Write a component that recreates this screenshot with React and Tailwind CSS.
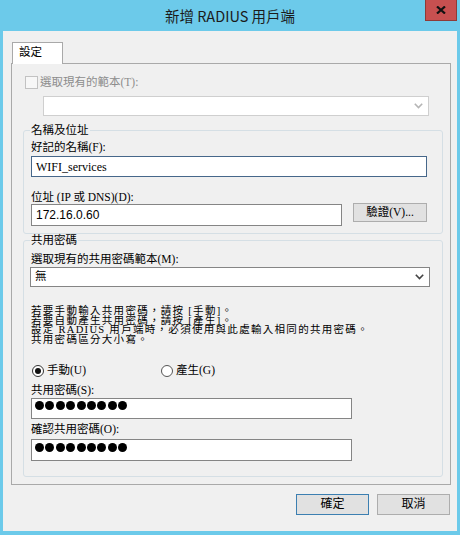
import React from "react";

const Chevron = ({ color }) => (
  <svg width="9" height="6" viewBox="0 0 9 6" fill="none">
    <polyline points="0.8,0.8 4.5,4.6 8.2,0.8" stroke={color} strokeWidth="1.6" />
  </svg>
);

const Dots = () => (
  <>
    {Array.from({ length: 9 }).map((_, i) => (
      <span key={i} className="w-[9px] h-[9px] rounded-full bg-black shrink-0" />
    ))}
  </>
);

const App = () => {
  return (
    <div className="w-[460px] h-[535px] bg-[#6ccaea] flex flex-col pl-[3px] pr-[3px] pb-[4px] font-['Liberation_Serif','Noto_Sans_CJK_TC',serif] text-black">
      {/* title bar */}
      <div className="h-[31px] relative flex items-center justify-center">
        <span className="text-[14.5px] leading-[18px] font-['Noto_Sans_CJK_TC',sans-serif] text-[#1b1b1b]">
          新增 RADIUS 用戶端
        </span>
        <div className="absolute right-0 top-0 w-[32px] h-[21px] bg-[#c75050] border border-t-0 border-[#8e3b37] flex items-center justify-center">
          <svg width="10" height="8" viewBox="0 0 10 8">
            <path d="M1 0.5 L9 7.5 M9 0.5 L1 7.5" stroke="#111" strokeWidth="2.2" />
          </svg>
        </div>
      </div>

      {/* dialog body */}
      <div className="flex-1 bg-[#f0f0f0] pt-[11px] pl-[8px] pr-[6px] flex flex-col">
        <div className="flex pl-px">
          <div className="relative z-10 -mb-px h-[22px] w-[51px] border border-b-0 border-[#a9a9a9] bg-white pl-[6px] pt-[3px] text-[11.5px] leading-[13px]">
            設定
          </div>
        </div>

        <div className="h-[422px] border border-[#a9a9a9] bg-[#f0f0f0] flex flex-col">
          {/* template checkbox */}
          <div className="mt-[12px] ml-[13px] flex items-center h-[13px]">
            <span className="w-[13px] h-[13px] border border-[#c2c2c2] bg-[#f7f7f7]" />
            <span className="ml-[2px] text-[11.5px] leading-[13px] text-[#8d8d8d]">選取現有的範本(T):</span>
          </div>
          <div className="mt-[7px] ml-[31px] w-[386px] h-[20px] border border-[#cfcfcf] bg-white flex items-center justify-end pr-[5px]">
            <Chevron color="#b5b5b5" />
          </div>

          {/* name and address */}
          <fieldset className="mt-[8px] ml-[11px] w-[420px] border border-[#d5dfe5] rounded-[3px] px-[7px] pb-[7px]">
            <legend className="-ml-[1px] px-px text-[11.5px] leading-[13px]">名稱及位址</legend>
            <div className="mt-[4px] text-[11.5px] leading-[13px]">好記的名稱(F):</div>
            <div className="mt-[2px] h-[21px] w-[396px] border border-[#46678a] bg-white pl-[4px] flex items-center text-[12px]">
              WIFI_services
            </div>
            <div className="mt-[14px] text-[11.5px] leading-[13px]">位址 (IP 或 DNS)(D):</div>
            <div className="flex items-start gap-[11px]">
              <div className="h-[22px] w-[311px] border border-[#858585] bg-white pl-[4px] flex items-center text-[12px] font-['Liberation_Sans',sans-serif]">
                172.16.0.60
              </div>
              <button className="-mt-px h-[19px] w-[74px] border border-[#adadad] bg-[#e1e1e1] text-[11.5px] leading-[13px]">
                驗證(V)...
              </button>
            </div>
          </fieldset>

          {/* shared secret */}
          <fieldset className="ml-[11px] w-[420px] border border-[#d5dfe5] rounded-[3px] px-[7px] pb-[15px]">
            <legend className="-ml-[1px] px-px text-[11.5px] leading-[13px]">共用密碼</legend>
            <div className="mt-[6px] text-[11.5px] leading-[13px]">選取現有的共用密碼範本(M):</div>
            <div className="mt-[1px] -ml-px h-[20px] w-[400px] border border-[#858585] bg-white pl-[4px] pr-[5px] flex items-center justify-between text-[11.5px]">
              <span>無</span>
              <Chevron color="#444" />
            </div>
            <div className="mt-[19px] text-[10.5px] leading-[9.6px] tracking-[1.3px]">
              <div>若要手動輸入共用密碼，請按 [手動]。</div>
              <div>若要自動產生共用密碼，請按 [產生]。</div>
              <div>設定 RADIUS 用戶端時，必須使用與此處輸入相同的共用密碼。</div>
              <div>共用密碼區分大小寫。</div>
            </div>
            <div className="mt-[20px] ml-px h-[13px] flex items-center text-[11.5px] leading-[13px]">
              <div className="w-[129px] flex items-center">
                <span className="w-[12px] h-[12px] rounded-full border border-[#333] bg-white flex items-center justify-center">
                  <span className="w-[6px] h-[6px] rounded-full bg-[#111]" />
                </span>
                <span className="ml-[3px]">手動(U)</span>
              </div>
              <div className="flex items-center">
                <span className="w-[12px] h-[12px] rounded-full border border-[#555] bg-white" />
                <span className="ml-[3px]">產生(G)</span>
              </div>
            </div>
            <div className="mt-[7px] text-[11.5px] leading-[13px]">共用密碼(S):</div>
            <div className="mt-[1px] h-[21px] w-[321px] border border-[#858585] bg-white pl-[3px] pt-[2px] flex items-start gap-[1.4px]">
              <Dots />
            </div>
            <div className="mt-[4px] text-[11.5px] leading-[13px]">確認共用密碼(O):</div>
            <div className="mt-[3px] h-[22px] w-[321px] border border-[#858585] bg-white pl-[3px] pt-[3px] flex items-start gap-[1.4px]">
              <Dots />
            </div>
          </fieldset>
        </div>

        {/* buttons */}
        <div className="mt-[9px] pr-[1px] flex justify-end gap-[8px]">
          <button className="h-[21px] w-[73px] border border-[#3c7fb1] bg-[#e1e1e1] text-[12px] leading-[13px]">確定</button>
          <button className="h-[21px] w-[73px] border border-[#adadad] bg-[#e1e1e1] text-[12px] leading-[13px]">取消</button>
        </div>
      </div>
    </div>
  );
};

export default App;
